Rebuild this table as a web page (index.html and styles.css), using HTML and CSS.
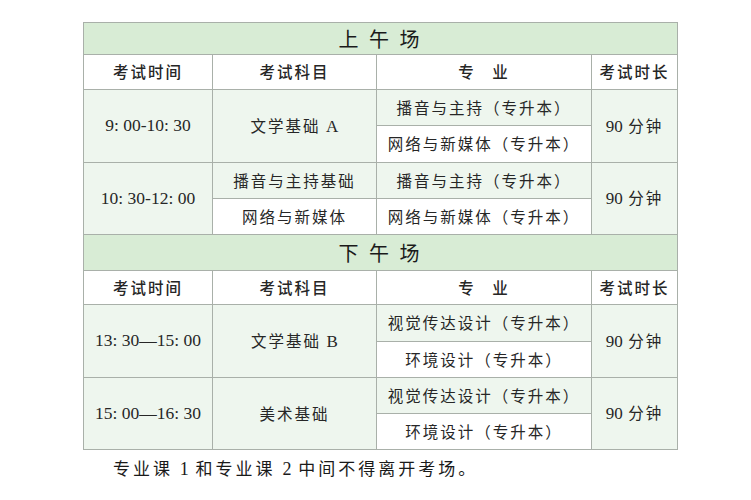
FILE: index.html
```html
<!DOCTYPE html>
<html lang="zh">
<head>
<meta charset="utf-8">
<link rel="stylesheet" href="styles.css">
</head>
<body>
<div class="page">
<table class="sched">
  <colgroup>
    <col class="c1"><col class="c2"><col class="c3"><col class="c4">
  </colgroup>
  <tr class="title"><td colspan="4">上 午 场</td></tr>
  <tr class="head"><td>考试时间</td><td>考试科目</td><td>专&nbsp;&nbsp;&nbsp;业</td><td>考试时长</td></tr>
  <tr class="sub s1 r1a"><td rowspan="2" class="g num">9:&nbsp;00-10:&nbsp;30</td><td rowspan="2" class="g">文学基础 <span class="lat">A</span></td><td class="g">播音与主持（专升本）</td><td rowspan="2" class="g dur"><span class="lat">90</span> 分钟</td></tr>
  <tr class="sub s2 r1b"><td>网络与新媒体（专升本）</td></tr>
  <tr class="sub s1 r2a"><td rowspan="2" class="g num">10:&nbsp;30-12:&nbsp;00</td><td class="g">播音与主持基础</td><td class="g">播音与主持（专升本）</td><td rowspan="2" class="g dur"><span class="lat">90</span> 分钟</td></tr>
  <tr class="sub s2 r2b"><td>网络与新媒体</td><td>网络与新媒体（专升本）</td></tr>
  <tr class="title t2"><td colspan="4">下 午 场</td></tr>
  <tr class="head h2"><td>考试时间</td><td>考试科目</td><td>专&nbsp;&nbsp;&nbsp;业</td><td>考试时长</td></tr>
  <tr class="sub s1 r3a"><td rowspan="2" class="g num">13:&nbsp;30—15:&nbsp;00</td><td rowspan="2" class="g">文学基础 <span class="lat">B</span></td><td class="g">视觉传达设计（专升本）</td><td rowspan="2" class="g dur"><span class="lat">90</span> 分钟</td></tr>
  <tr class="sub s2 r3b"><td>环境设计（专升本）</td></tr>
  <tr class="sub s1 r4a"><td rowspan="2" class="g num">15:&nbsp;00—16:&nbsp;30</td><td rowspan="2" class="g">美术基础</td><td class="g">视觉传达设计（专升本）</td><td rowspan="2" class="g dur"><span class="lat">90</span> 分钟</td></tr>
  <tr class="sub s2 r4b"><td>环境设计（专升本）</td></tr>
</table>
<p class="note">专业课 <span class="lat">1</span> 和专业课 <span class="lat">2</span> 中间不得离开考场。</p>
</div>
</body>
</html>
```
FILE: styles.css
```css
html, body {
  margin: 0;
  padding: 0;
  background: #ffffff;
}
.page {
  width: 751px;
  height: 500px;
  padding: 22px 0 0 83px;
  box-sizing: border-box;
  font-family: "Noto Sans CJK SC", sans-serif;
  color: #262626;
}
.sched {
  border-collapse: collapse;
  table-layout: fixed;
  width: 594px;
}
.c1 { width: 129px; }
.c2 { width: 164px; }
.c3 { width: 215px; }
.c4 { width: 86px; }
.sched td {
  border: 1.5px solid #a9b0a9;
  padding: 0;
  text-align: center;
  vertical-align: middle;
  font-size: 15.5px;
  letter-spacing: 2px;
  font-weight: 400;
  line-height: 1;
  background: #ffffff;
}
.sched td.g { background: #eef6ee; }
.title td {
  background: #d8ecd5;
  font-size: 20px;
  letter-spacing: 3px;
  height: 31px;
  color: #1a1a1a;
}
.title.t2 td { height: 35px; }
.head td { height: 34px; font-weight: 500; }
.head.h2 td { height: 33px; }
.sub td { height: 35px; }
.r1b td { height: 36px; }
.r3a td { height: 36px; }
.sub.s2 td { border-top-color: #b8beb8; }
.sched td.num {
  font-family: "Liberation Serif", serif;
  font-size: 17.5px;
  letter-spacing: 0;
}
.lat {
  font-family: "Liberation Serif", serif;
  font-size: 17px;
  letter-spacing: 0;
}
.dur { letter-spacing: 2px; }
.note {
  margin: 5px 0 0 30px;
  font-size: 17px;
  letter-spacing: 3px;
  color: #1a1a1a;
}
.note .lat { font-size: 18px; }
```
